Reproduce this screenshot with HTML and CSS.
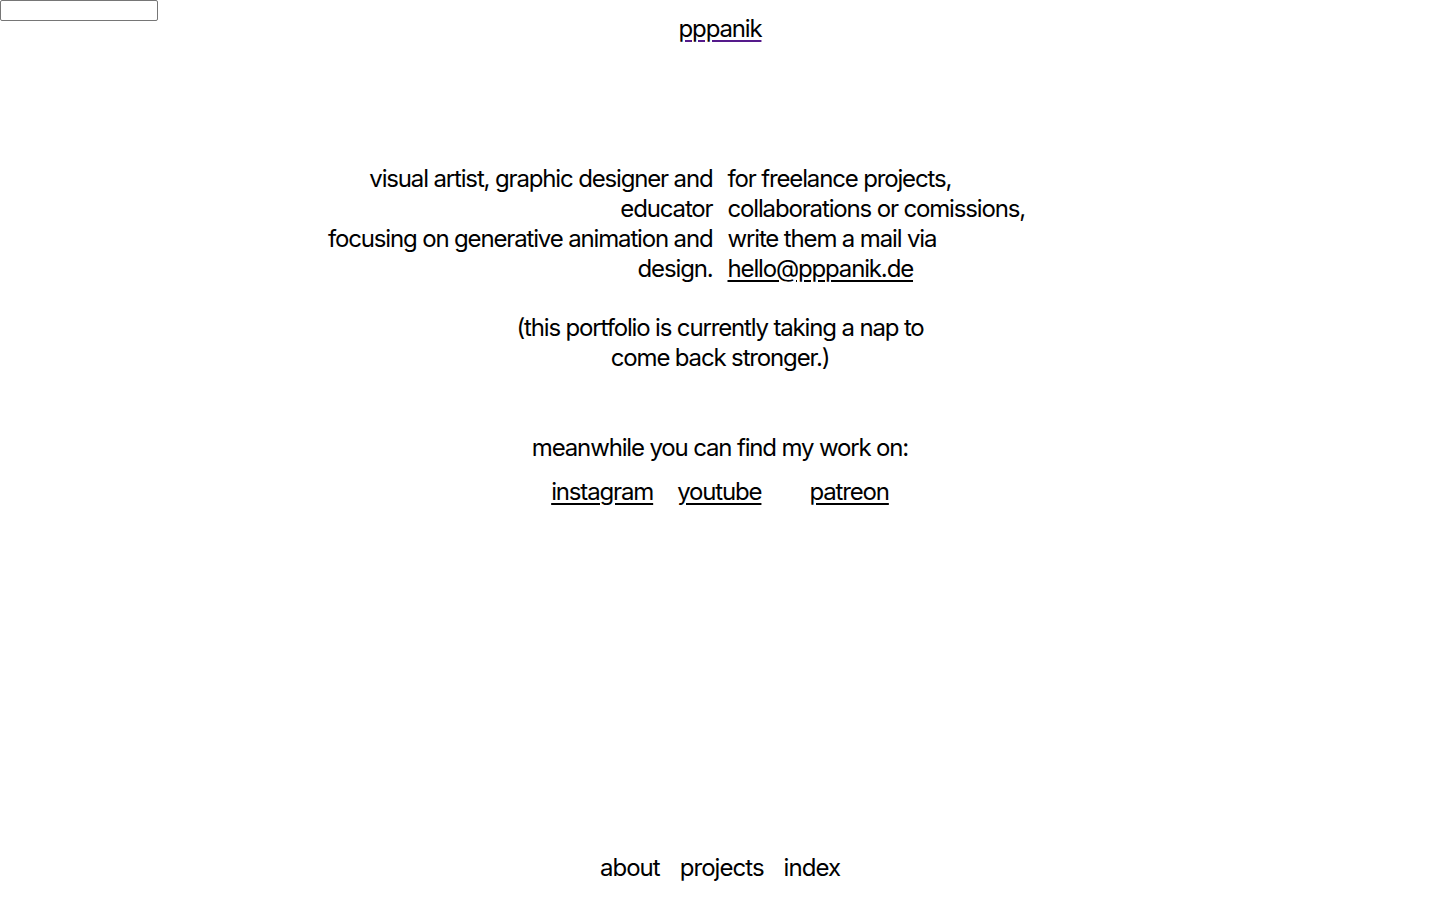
FILE: index.html
```html
<!DOCTYPE html>
<html lang="en">
<head>
<meta charset="utf-8">
<title>pppanik</title>
<link rel="stylesheet" href="styles.css">
</head>
<body>
<div class="page">
  <header class="top">
    <input class="search" type="text" aria-label="search">
    <a class="brand" href="#">pppanik</a>
  </header>
  <main class="main">
    <section class="cols">
      <p class="col left">visual artist, graphic designer and educator<br>focusing on generative animation and design.</p>
      <p class="col right">for freelance projects,<br>collaborations or comissions,<br>write them a mail via<br><a href="#" class="link">hello@pppanik.de</a></p>
    </section>
    <p class="nap">(this portfolio is currently taking a nap to<br>come back stronger.)</p>
    <p class="meanwhile">meanwhile you can find my work on:</p>
    <nav class="socials">
      <a href="#" class="link s-insta">instagram</a>
      <a href="#" class="link s-yt">youtube</a>
      <a href="#" class="link s-pat">patreon</a>
    </nav>
  </main>
  <footer class="foot">
    <a href="#" class="fl">about</a>
    <a href="#" class="fl">projects</a>
    <a href="#" class="fl">index</a>
  </footer>
</div>
</body>
</html>
```
FILE: styles.css
```css
html, body {
  margin: 0;
  padding: 0;
  background: #fff;
}
body {
  font-family: Inter, "Noto Sans", sans-serif;
  font-size: 24px;
  line-height: 30px;
  letter-spacing: -0.048em;
  color: #000;
}
.page {
  height: 900px;
  display: flex;
  flex-direction: column;
}
.top {
  position: relative;
  display: flex;
  justify-content: center;
  padding-top: 14px;
}
.search {
  position: absolute;
  left: 0;
  top: 0;
  width: 158px;
  height: 21px;
  box-sizing: border-box;
  border: 1px solid #767676;
  border-radius: 2px;
  margin: 0;
  padding: 1px 2px;
  background: #fff;
}
.brand {
  color: #000;
  text-decoration: underline;
  text-decoration-color: #551a8b;
  text-underline-offset: 3px;
}
.main {
  flex: 1;
  display: flex;
  flex-direction: column;
  align-items: center;
  padding-top: 120px;
}
.cols {
  display: grid;
  grid-template-columns: 400px 400px;
  column-gap: 15px;
}
.col {
  margin: 0;
}
.left { text-align: right; }
.right { text-align: left; }
.link {
  color: #000;
  text-decoration: underline;
  text-underline-offset: 3px;
}
.nap {
  margin: 29px 0 0;
  text-align: center;
}
.meanwhile {
  margin: 60px 0 0;
  text-align: center;
}
.socials {
  display: flex;
  margin-top: 14px;
}
.s-insta { margin-right: 24px; }
.s-yt { margin-right: 48px; }
.foot {
  display: flex;
  justify-content: center;
  gap: 20px;
  padding-bottom: 17px;
  letter-spacing: -0.04em;
}
.fl {
  color: #000;
  text-decoration: none;
}
```
